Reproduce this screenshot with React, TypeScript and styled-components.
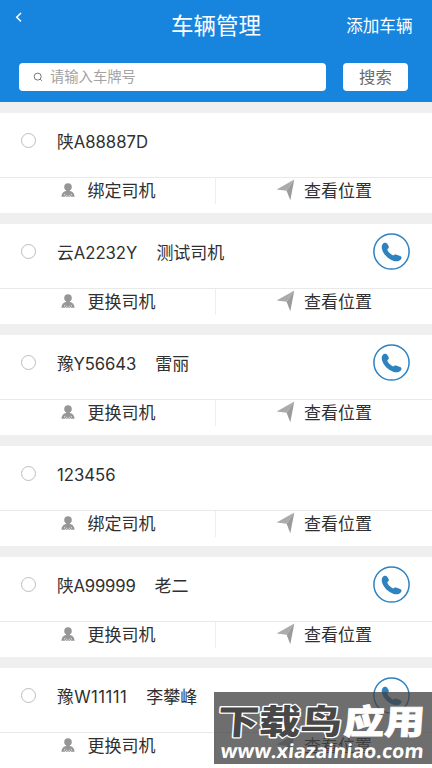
import React from 'react';
import styled, { createGlobalStyle } from 'styled-components';

const Global = createGlobalStyle`
  * { box-sizing: border-box; }
  body { margin: 0; background: #efefef; font-family: Inter, "Noto Sans CJK SC", sans-serif; color: #303030; }
  button { font: inherit; border: 0; padding: 0; background: none; color: inherit; }
`;

const Screen = styled.main`
  position: relative;
  width: 432px;
  height: 768px;
  overflow: hidden;
  background: #efefef;
`;

const Header = styled.header`
  height: 102px;
  background: #1785dd;
  color: #fff;
`;

const TitleBar = styled.div`
  height: 50px;
  display: grid;
  grid-template-columns: 120px 1fr 120px;
  align-items: center;
`;

const Back = styled.button`
  display: flex;
  padding-left: 14px;
  margin-top: -18px;
`;

const Title = styled.h1`
  margin: 0;
  font-size: 22.5px;
  line-height: 52px;
  font-weight: 400;
  text-align: center;
  white-space: nowrap;
`;

const AddButton = styled.button`
  font-size: 16.6px;
  line-height: 52px;
  text-align: right;
  padding-right: 19.5px;
`;

const SearchRow = styled.div`
  display: flex;
  gap: 17px;
  padding: 13px 0 0 19px;
`;

const SearchField = styled.label`
  display: flex;
  align-items: center;
  gap: 7px;
  width: 307px;
  height: 28px;
  padding-left: 14px;
  border-radius: 4px;
  background: #fff;
  color: #a3a3a3;
  font-size: 14.3px;
  line-height: 28px;
`;

const SearchButton = styled.button`
  width: 65px;
  height: 28px;
  border-radius: 4px;
  background: #fff;
  color: #6b6b6b;
  font-size: 16.4px;
  line-height: 28px;
`;

const List = styled.div`
  display: flex;
  flex-direction: column;
  gap: 11px;
  padding-top: 11px;
`;

const Card = styled.section`
  height: 100px;
  flex: none;
  background: #fff;
`;

const Info = styled.div`
  display: flex;
  align-items: center;
  height: 65px;
  padding: 0 22px 0 21px;
  border-bottom: 1px solid #e9e9e9;
`;

const Radio = styled.span`
  width: 15px;
  height: 15px;
  margin: -9px 21px 0 0;
  border: 1px solid #bdbdbd;
  border-radius: 50%;
`;

const Plate = styled.span<{ $tracking: number }>`
  font-size: 16.7px;
  line-height: 24px;
  margin-top: -6px;
  letter-spacing: ${(p) => p.$tracking}px;
`;

const Driver = styled.span`
  margin: -7px 0 0 19px;
  font-size: 17px;
  line-height: 24px;
`;

const Call = styled.button`
  display: flex;
  margin: -9px 0 0 auto;
`;

const Actions = styled.div`
  display: grid;
  grid-template-columns: 216px 1fr;
  height: 26px;
`;

const Action = styled.button<{ $start: number; $gap: number; $divided?: boolean }>`
  display: flex;
  align-items: center;
  gap: ${(p) => p.$gap}px;
  height: 26px;
  padding-left: ${(p) => p.$start}px;
  border-right: ${(p) => (p.$divided ? '1px solid #eeeeee' : '0')};
  font-size: 17px;
  line-height: 26px;

  svg {
    margin-top: -2px;
  }
`;

const Watermark = styled.aside`
  position: absolute;
  left: 214px;
  top: 692px;
  width: 218px;
  height: 72px;
  background: rgba(66, 66, 66, 0.77);
`;

const Brand = styled.svg`
  display: block;
  width: 218px;
  height: 72px;
  overflow: visible;
`;

const BackIcon = () => (
  <svg width="9" height="12" viewBox="0 0 9 12" fill="none" stroke="#fff" strokeWidth="1.5">
    <path d="M7 2 2.7 6.2 7 10.4" />
  </svg>
);

const SearchIcon = () => (
  <svg width="10" height="10" viewBox="0 0 10 10" fill="none" stroke="#777" strokeWidth="1">
    <circle cx="4.7" cy="4.6" r="3.5" />
    <path d="m7.2 7.1 1.7 1.8" />
  </svg>
);

const DriverIcon = () => (
  <svg width="14" height="14" viewBox="0 0 14 14" fill="#969696">
    <circle cx="7" cy="4" r="3.8" />
    <path d="M5.2 7h3.6v1c2.8.3 4.6 2.4 4.8 5.8H.4C.6 10.4 2.4 8.3 5.2 8z" />
    <path d="m3 12.2 1.2-.9M11 12.2l-1.2-.9M5.2 12.3h1M7.8 12.3h1M4 13.7h1M6.5 13.7h1M9 13.7h1" stroke="#fff" strokeWidth=".8" />
  </svg>
);

const LocateIcon = () => (
  <svg width="19" height="22" viewBox="0 0 19 22">
    <path d="M18.3.4.6 10.5l10 1.2z" fill="#ababab" />
    <path d="m18.3.4-4 20.8-3.7-9.5z" fill="#9b9b9b" />
  </svg>
);

const PhoneIcon = () => (
  <svg width="37" height="37" viewBox="0 0 37 37">
    <circle cx="18.5" cy="18.5" r="17.6" fill="#fff" stroke="#2f82c0" strokeWidth="1.5" />
    <path
      d="M9.6 11.2c1-1.4 3.2-1.9 4.4-.8l1.6 2.6c.6 1.2.1 2.4-1.3 3.2.3 2.2 3.3 5.1 5.9 6.2 1.1-1 2.3-1 3.5-.6l3.4 1.2c1.5.5 1.8 1.8 1 3-1.4 2.3-4.7 3-8 1.7-5.3-2-9.6-6.4-11-11.2-.6-2.2-.5-4 .5-5.3Z"
      fill="#2f82c0"
    />
  </svg>
);

interface Vehicle {
  plate: string;
  driver?: string;
  tracking?: number;
}

const vehicles: Vehicle[] = [
  { plate: '陕A88887D' },
  { plate: '云A2232Y', driver: '测试司机' },
  { plate: '豫Y56643', driver: '雷丽', tracking: -0.1 },
  { plate: '123456' },
  { plate: '陕A99999', driver: '老二', tracking: -0.2 },
  { plate: '豫W11111', driver: '李攀峰', tracking: 0.45 },
];

const VehicleCard = ({ plate, driver, tracking = 0 }: Vehicle) => (
  <Card>
    <Info>
      <Radio />
      <Plate $tracking={tracking}>{plate}</Plate>
      {driver && <Driver>{driver}</Driver>}
      {driver && <Call aria-label="电话"><PhoneIcon /></Call>}
    </Info>
    <Actions>
      <Action $start={61} $gap={12.5} $divided>
        <DriverIcon />
        {driver ? '更换司机' : '绑定司机'}
      </Action>
      <Action $start={60} $gap={9}>
        <LocateIcon />
        查看位置
      </Action>
    </Actions>
  </Card>
);

export default function App() {
  return (
    <Screen>
      <Global />
      <Header>
        <TitleBar>
          <Back aria-label="返回"><BackIcon /></Back>
          <Title>车辆管理</Title>
          <AddButton>添加车辆</AddButton>
        </TitleBar>
        <SearchRow>
          <SearchField><SearchIcon />请输入车牌号</SearchField>
          <SearchButton>搜索</SearchButton>
        </SearchRow>
      </Header>
      <List>
        {vehicles.map((v) => <VehicleCard key={v.plate} {...v} />)}
      </List>
      <Watermark>
        <Brand viewBox="0 0 218 72" fontFamily='"Noto Sans CJK SC", sans-serif' fontWeight="900">
          <g transform="translate(3 42) skewX(-4)">
            <text fontSize="34" textLength="124" lengthAdjust="spacingAndGlyphs" fill="#484848" stroke="#fff" strokeWidth="2.6" strokeLinejoin="round" paintOrder="stroke">下载鸟</text>
            <text x="126" fontSize="34" textLength="81" lengthAdjust="spacingAndGlyphs" fill="#fff" stroke="#fff" strokeWidth="0.8">应用</text>
          </g>
          <g transform="translate(6 66) skewX(-6)">
            <text fontFamily='"Open Sans", sans-serif' fontWeight="700" fontSize="19.5" textLength="203" lengthAdjust="spacingAndGlyphs" fill="#fff">www.xiazainiao.com</text>
          </g>
        </Brand>
      </Watermark>
    </Screen>
  );
}
